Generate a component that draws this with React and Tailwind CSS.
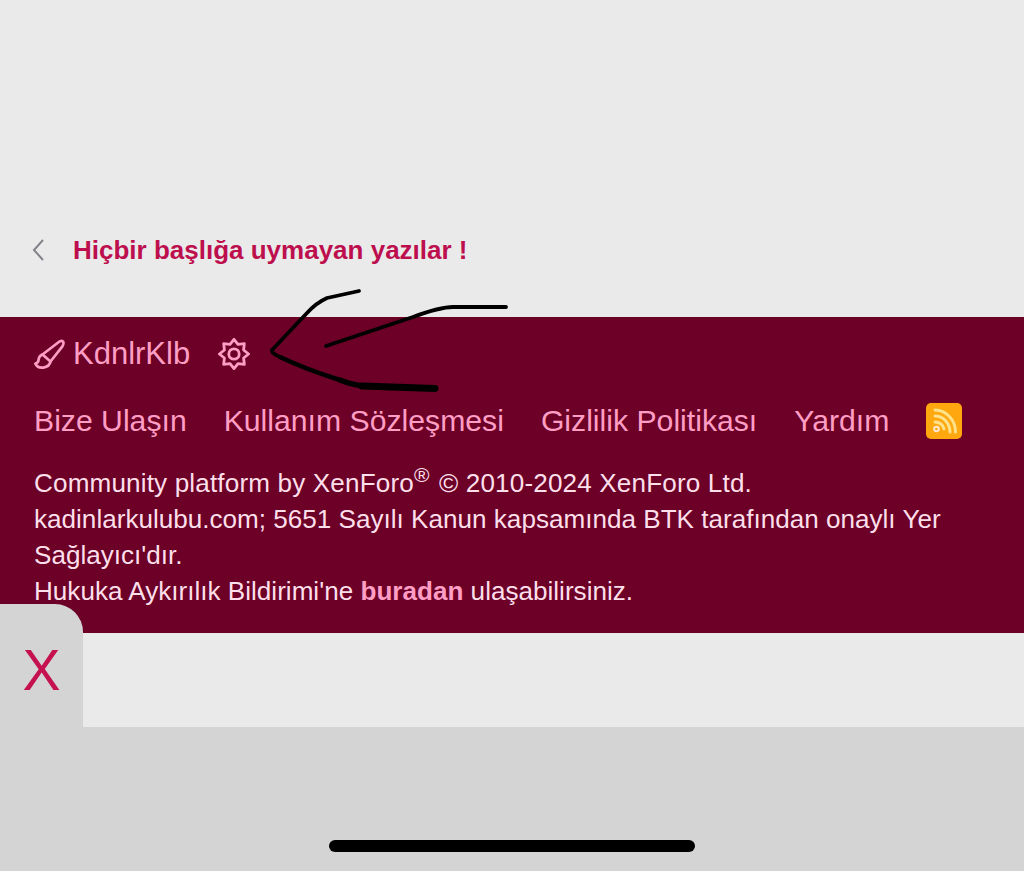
import React from 'react';

const links = ['Bize Ulaşın', 'Kullanım Sözleşmesi', 'Gizlilik Politikası', 'Yardım'];

function BrushIcon() {
  return (
    <svg width="31" height="31" viewBox="0 0 31 31" fill="none" stroke="currentColor" strokeWidth="2.7" strokeLinecap="round" strokeLinejoin="round">
      <path d="M8.5 15.5 L24.5 3.2 Q27.6 1 29 2.6 Q30.2 4.2 28.4 7.4 L16.5 22.5 Z" />
      <path d="M8.5 15.5 Q4.8 17 4.6 20.5 Q4.4 24 1.4 24.6 Q3.6 29.4 9.4 28.6 Q15.6 27.6 16.5 22.5" />
    </svg>
  );
}

// 8 point gear, same shape as the forum's style icon
function GearIcon() {
  const pts = [];
  for (let i = 0; i < 16; i++) {
    const r = i % 2 === 0 ? 14.6 : 10.4;
    const a = (i * Math.PI) / 8 - Math.PI / 2;
    pts.push(`${(16 + r * Math.cos(a)).toFixed(2)},${(16 + r * Math.sin(a)).toFixed(2)}`);
  }
  return (
    <svg width="32" height="32" viewBox="0 0 32 32" fill="none" stroke="currentColor" strokeWidth="2.8" strokeLinejoin="round">
      <polygon points={pts.join(' ')} />
      <circle cx="16" cy="16" r="5.2" />
    </svg>
  );
}

function RssIcon() {
  return (
    <div className="w-[36px] h-[36px] rounded-[5px] bg-[#ffa70f]">
      <svg width="36" height="36" viewBox="0 0 36 36" fill="none" stroke="#ffe38a" strokeWidth="3" strokeLinecap="round">
        <path d="M9 7 C20 7 29.5 17 29.5 29" />
        <path d="M9 13 C17 13 24 20 24 29" />
        <path d="M9 19 C13.5 19 17.5 22 18 26" />
        <circle cx="10.5" cy="26" r="2.3" fill="#ffa70f" stroke="#ffe8d0" strokeWidth="2" />
      </svg>
    </div>
  );
}

// the hand drawn arrow on top of the screenshot
function Scribble() {
  return (
    <svg className="absolute left-0 top-0 pointer-events-none" width="1024" height="871" fill="none" stroke="#000" strokeLinecap="round" strokeLinejoin="round">
      <path d="M359 291 L327 298 Q316 303 307 313 L272 350 Q271 353 280 357" strokeWidth="3.8" />
      <path d="M280 357 Q305 369 340 380" strokeWidth="4.5" />
      <path d="M340 380 Q352 385 368 386.5" strokeWidth="5.5" />
      <path d="M362 386 L435 388.5" strokeWidth="7" />
      <path d="M326 346 L413 317 Q440 307 453 307 L506 307" strokeWidth="3.8" />
    </svg>
  );
}

export default function App() {
  return (
    <div className="relative w-[1024px] h-[871px] overflow-hidden bg-[#eaeaea] font-['Liberation_Sans',Arial,sans-serif]">
      <div className="h-[317px] pt-[233px] pl-[32px] flex items-start">
        <div className="flex items-center h-[34px]">
          <svg width="14" height="24" viewBox="0 0 14 24" fill="none" stroke="#85828a" strokeWidth="2">
            <path d="M11 2 L2 12 L11 22" />
          </svg>
          <span className="ml-[27px] text-[26px] font-bold text-[#bd0f4e]">Hiçbir başlığa uymayan yazılar !</span>
        </div>
      </div>

      <footer className="h-[316px] bg-[#6c0026] px-[34px] pt-[18px] text-[#ff9ec5]">
        <div className="flex items-center h-[38px]">
          <BrushIcon />
          <span className="ml-[8px] text-[31px]">KdnlrKlb</span>
          <span className="ml-[28px]">
            <GearIcon />
          </span>
        </div>
        <div className="flex items-center gap-[37px] mt-[29px] h-[38px] text-[30.2px]">
          {links.map((l) => (
            <span key={l}>{l}</span>
          ))}
          <RssIcon />
        </div>
        <div className="mt-[25px] text-[26.1px] leading-[36px] text-[#fcdfea]">
          <div className="h-[36px] tracking-[0.15px]">Community platform by XenForo<sup className="text-[21px] mr-[2px]">®</sup> © 2010-2024 XenForo Ltd.</div>
          <div>kadinlarkulubu.com; 5651 Sayılı Kanun kapsamında BTK tarafından onaylı Yer Sağlayıcı'dır.</div>
          <div>Hukuka Aykırılık Bildirimi'ne <b className="text-[#ff9ec5]">buradan</b> ulaşabilirsiniz.</div>
        </div>
      </footer>

      <div className="h-[94px]" />
      <div className="h-[144px] bg-[#d4d4d4] flex justify-center pt-[113px]">
        <div className="w-[366px] h-[12px] rounded-full bg-black" />
      </div>

      <div className="absolute left-0 top-[604px] w-[83px] h-[123px] rounded-tr-[28px] bg-[#d4d4d4] flex items-center justify-center pt-[9px]">
        <span className="text-[57px] text-[#c5114f] leading-none">X</span>
      </div>
      <Scribble />
    </div>
  );
}
